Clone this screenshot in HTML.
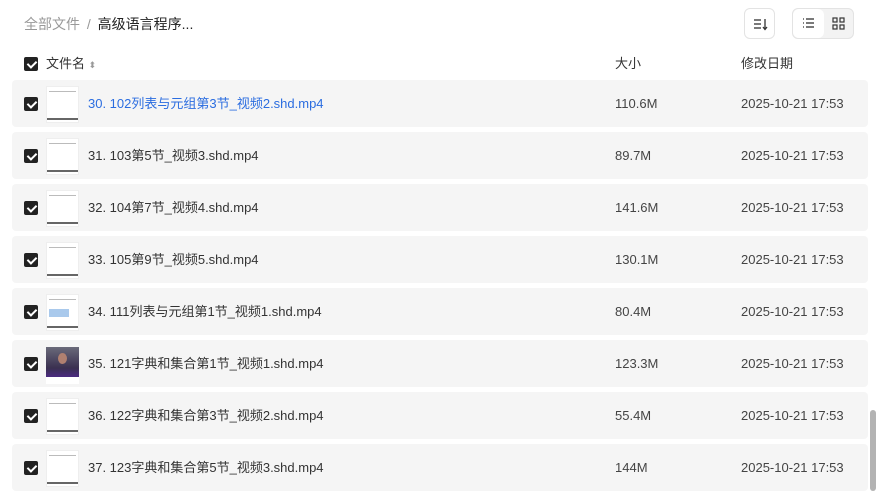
<!DOCTYPE html>
<html><head><meta charset="utf-8"><style>
*{margin:0;padding:0;box-sizing:border-box}
body{width:878px;height:495px;overflow:hidden;background:#fff;font-family:"Liberation Sans","Noto Sans CJK SC",sans-serif;color:#333;position:relative}
.bc{position:absolute;left:24px;top:14px;font-size:14px;line-height:20px;color:#999}
.bc b{font-weight:normal;color:#222}
.btn{position:absolute;top:8px;height:31px;border:1px solid #e3e3e3;border-radius:6px;background:#fff}
.hd{position:absolute;top:54px;font-size:13px;line-height:20px;color:#333}
.cb{position:absolute;width:14px;height:14px;background:#222;border-radius:2px}
.cb:after{content:"";position:absolute;left:4.5px;top:2px;width:4px;height:7px;border:solid #fff;border-width:0 2px 2px 0;transform:rotate(45deg)}
.row{position:absolute;left:12px;width:856px;height:47px;background:#f5f5f5;border-radius:4px}
.row .cb{left:12px;top:17px}
.th{position:absolute;left:34px;top:6px;width:33px;height:37px;background:#fff;border:1px solid #eee}
.th:before{content:"";position:absolute;left:2px;right:2px;top:4px;height:1px;background:#bbb}
.th:after{content:"";position:absolute;left:0;right:0;bottom:2px;height:2px;background:#666}
.nm,.sz,.dt{position:absolute;top:0;line-height:47px;font-size:13px;height:47px}
.nm{left:76px;color:#333}
.sz{left:603px;color:#444}
.dt{left:729px;color:#444}
</style></head><body>
<div class="bc">全部文件 <span style="margin:0 3px">/</span> <b>高级语言程序...</b></div>
<div class="btn" style="left:744px;width:31px">
<svg width="31" height="31" viewBox="0 0 31 31"><g stroke="#333" stroke-width="1.3"><line x1="9" y1="11" x2="16" y2="11"/><line x1="9" y1="15" x2="16" y2="15"/><line x1="9" y1="19" x2="16" y2="19"/><line x1="20" y1="10" x2="20" y2="20"/><polyline points="18,18 20,20.5 22,18" fill="none"/></g></svg></div>
<div class="btn" style="left:792px;width:62px;background:#f3f3f3">
<div style="position:absolute;left:0;top:0;width:31px;height:29px;background:#fff;border-radius:6px"></div>
<svg style="position:absolute;left:0;top:0" width="62" height="29" viewBox="0 0 62 29"><g stroke="#333" stroke-width="1.3"><line x1="10" y1="10" x2="11" y2="10"/><line x1="10" y1="14" x2="11" y2="14"/><line x1="10" y1="18" x2="11" y2="18"/><line x1="13" y1="10" x2="21" y2="10"/><line x1="13" y1="14" x2="21" y2="14"/><line x1="13" y1="18" x2="21" y2="18"/></g><g stroke="#333" stroke-width="1.2" fill="none"><rect x="40" y="9" width="4" height="4"/><rect x="47" y="9" width="4" height="4"/><rect x="40" y="16" width="4" height="4"/><rect x="47" y="16" width="4" height="4"/></g></svg></div>
<div class="cb" style="left:24px;top:57px"></div>
<div class="hd" style="left:46px">文件名 <span style="font-size:9px;color:#999">⬍</span></div>
<div class="hd" style="left:615px">大小</div>
<div class="hd" style="left:741px">修改日期</div>

<div class="row" style="top:80px"><div class="cb"></div><div class="th"></div><div class="nm" style="color:#2b6de0">30. 102列表与元组第3节_视频2.shd.mp4</div><div class="sz">110.6M</div><div class="dt">2025-10-21 17:53</div></div>
<div class="row" style="top:132px"><div class="cb"></div><div class="th"></div><div class="nm">31. 103第5节_视频3.shd.mp4</div><div class="sz">89.7M</div><div class="dt">2025-10-21 17:53</div></div>
<div class="row" style="top:184px"><div class="cb"></div><div class="th"></div><div class="nm">32. 104第7节_视频4.shd.mp4</div><div class="sz">141.6M</div><div class="dt">2025-10-21 17:53</div></div>
<div class="row" style="top:236px"><div class="cb"></div><div class="th"></div><div class="nm">33. 105第9节_视频5.shd.mp4</div><div class="sz">130.1M</div><div class="dt">2025-10-21 17:53</div></div>
<div class="row" style="top:288px"><div class="cb"></div><div class="th"><div style="position:absolute;left:2px;top:14px;width:20px;height:8px;background:#a9c9ec"></div></div><div class="nm">34. 111列表与元组第1节_视频1.shd.mp4</div><div class="sz">80.4M</div><div class="dt">2025-10-21 17:53</div></div>
<div class="row" style="top:340px"><div class="cb"></div><div style="position:absolute;left:34px;top:7px;width:33px;height:37px;background:#fff"><div style="position:absolute;left:0;top:0;width:33px;height:30px;background:linear-gradient(#6a6a7a,#3a3050 70%,#4a2a80)"></div><div style="position:absolute;left:12px;top:6px;width:9px;height:11px;border-radius:50%;background:#b08070"></div></div><div class="nm">35. 121字典和集合第1节_视频1.shd.mp4</div><div class="sz">123.3M</div><div class="dt">2025-10-21 17:53</div></div>
<div class="row" style="top:392px"><div class="cb"></div><div class="th"></div><div class="nm">36. 122字典和集合第3节_视频2.shd.mp4</div><div class="sz">55.4M</div><div class="dt">2025-10-21 17:53</div></div>
<div class="row" style="top:444px"><div class="cb"></div><div class="th"></div><div class="nm">37. 123字典和集合第5节_视频3.shd.mp4</div><div class="sz">144M</div><div class="dt">2025-10-21 17:53</div></div>
<div style="position:absolute;left:870px;top:410px;width:6px;height:81px;border-radius:3px;background:#b3b3b3"></div>
</body></html>
